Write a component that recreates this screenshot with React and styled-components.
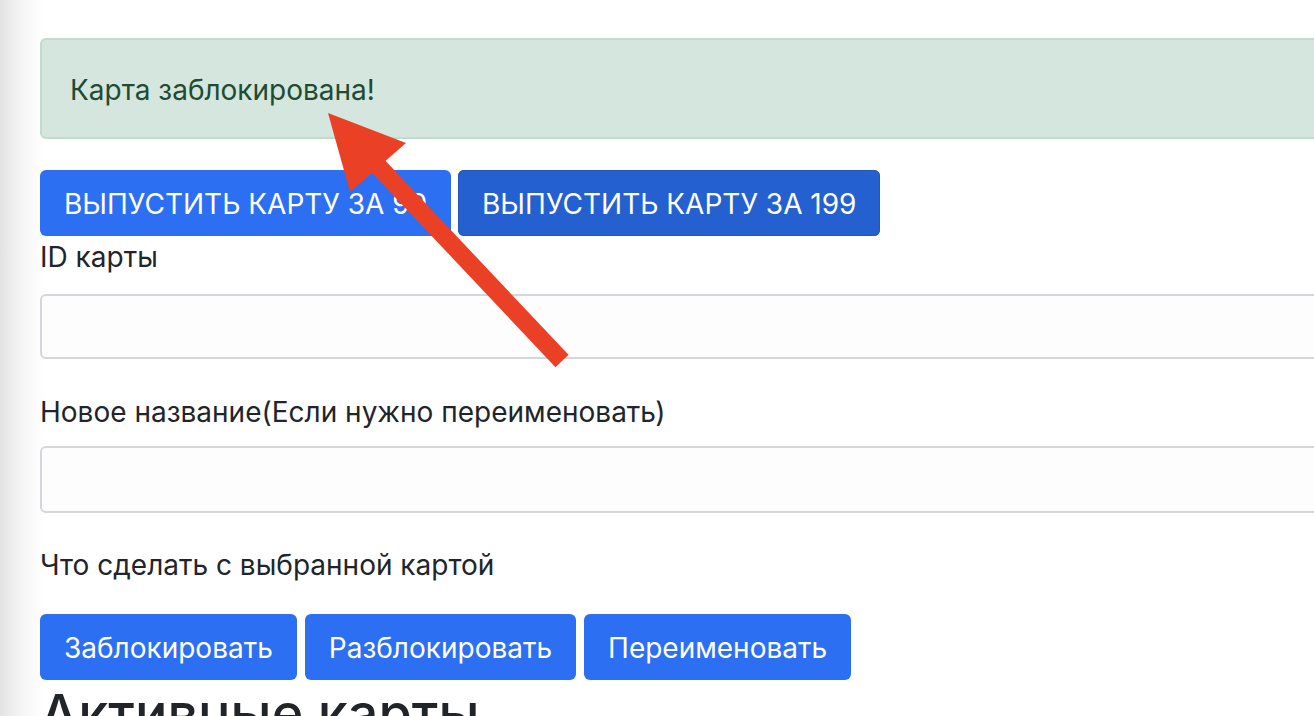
import React from "react";
import styled, { createGlobalStyle } from "styled-components";

const Global = createGlobalStyle`
  html, body { margin: 0; padding: 0; }
  body {
    width: 1314px;
    height: 716px;
    overflow: hidden;
    font-family: Inter, "Liberation Sans", Arial, sans-serif;
    color: #212529;
    background: linear-gradient(to right, #e2e2e2 0px, #f3f3f3 18px, #fcfcfc 36px, #ffffff 48px);
  }
`;

const Page = styled.div`
  position: relative;
  width: 1314px;
  height: 716px;
  overflow: hidden;
`;

const Container = styled.div`
  width: 1420px;
  padding: 38px 0 0 40px;
  display: flex;
  flex-direction: column;
`;

const Alert = styled.div`
  height: 101px;
  box-sizing: border-box;
  display: flex;
  align-items: center;
  padding: 2px 28px 0;
  background: #d4e6dd;
  border: 2px solid #c0dccd;
  border-radius: 6px;
  color: #1e4b31;
  font-size: 28px;
  margin-bottom: 31px;
`;

const ButtonRow = styled.div`
  display: flex;
  gap: ${(p) => p.$gap}px;
`;

const Button = styled.button`
  height: 66px;
  box-sizing: border-box;
  border: none;
  border-radius: 6px;
  padding: 1px ${(p) => p.$px}px 0;
  background: ${(p) => (p.$dark ? "#2460cf" : "#2d6ff2")};
  box-shadow: ${(p) => (p.$dark ? "inset 0 0 0 1px #2158bd" : "none")};
  color: #fff;
  font-family: Inter, "Liberation Sans", Arial, sans-serif;
  font-size: ${(p) => p.$fs}px;
  text-transform: ${(p) => (p.$upper ? "uppercase" : "none")};
  white-space: nowrap;
`;

const Label = styled.div`
  font-size: 28px;
  line-height: 42px;
  margin-top: ${(p) => p.$mt}px;
  margin-bottom: ${(p) => p.$mb}px;
`;

const Input = styled.div`
  height: ${(p) => p.$h}px;
  box-sizing: border-box;
  border: 2px solid #d3d6da;
  border-radius: 6px;
  background: #fdfdfd;
`;

const Heading = styled.h2`
  margin: 0;
  font-size: 54px;
  font-weight: 500;
  line-height: 67px;
  color: #212529;
  white-space: nowrap;
`;

const Arrow = styled.svg`
  position: absolute;
  left: 0;
  top: 0;
  pointer-events: none;
`;

export default function App() {
  return (
    <>
      <Global />
      <Page>
        <Container>
          <Alert>Карта заблокирована!</Alert>
          <ButtonRow $gap={7}>
            <Button $upper $px={24} $fs={28}>Выпустить карту за 99</Button>
            <Button $upper $dark $px={24} $fs={28}>Выпустить карту за 199</Button>
          </ButtonRow>
          <Label $mt={0} $mb={16}>ID карты</Label>
          <Input $h={65} />
          <Label $mt={32} $mb={13}>Новое название(Если нужно переименовать)</Label>
          <Input $h={67} />
          <Label $mt={31} $mb={28}>Что сделать с выбранной картой</Label>
          <ButtonRow $gap={8}>
            <Button $px={24} $fs={28}>Заблокировать</Button>
            <Button $px={24} $fs={28}>Разблокировать</Button>
            <Button $px={24} $fs={28}>Переименовать</Button>
          </ButtonRow>
          <Heading>Активные карты</Heading>
        </Container>
        <Arrow width="1314" height="716" viewBox="0 0 1314 716">
          <line x1="562" y1="361" x2="378" y2="166" stroke="#ea4126" strokeWidth="18" />
          <polygon points="328,113 406,143 350,192" fill="#ea4126" />
        </Arrow>
      </Page>
    </>
  );
}
